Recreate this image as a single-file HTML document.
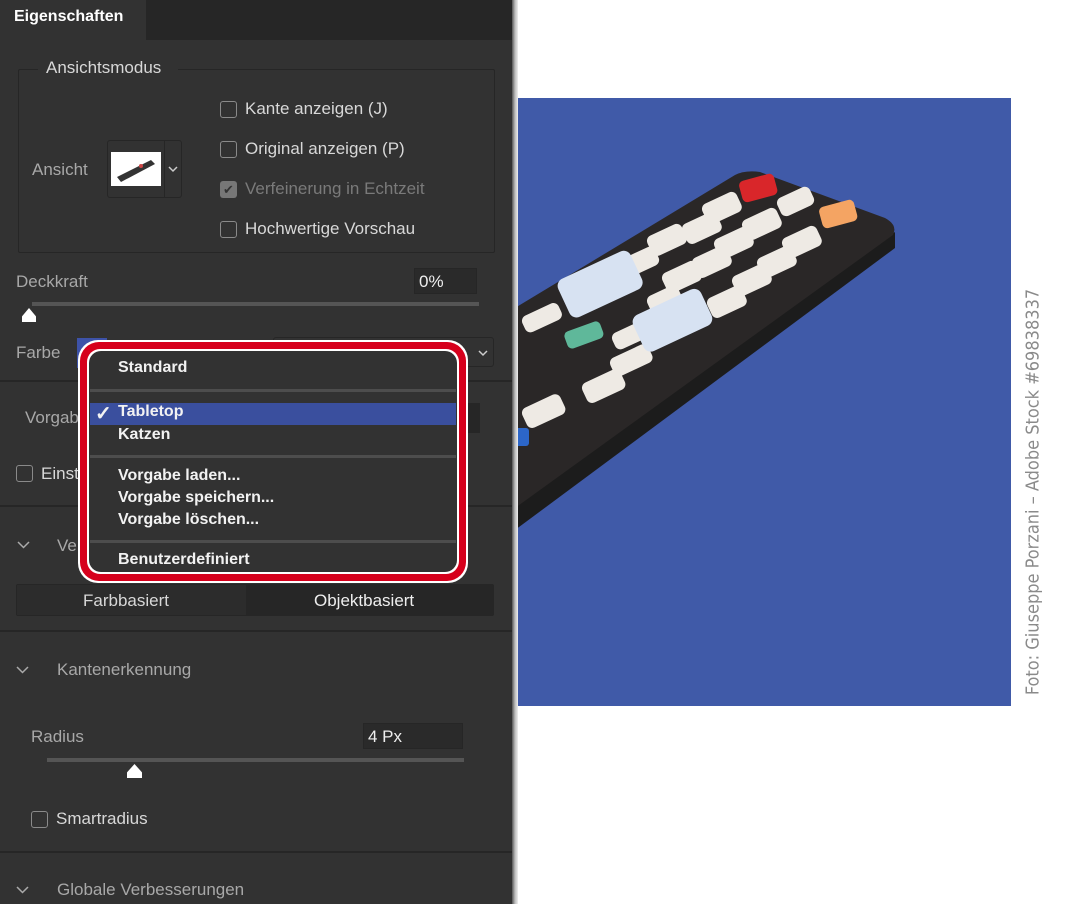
<!DOCTYPE html>
<html><head><meta charset="utf-8"><style>
*{margin:0;padding:0;box-sizing:border-box}
body{width:1070px;height:904px;background:#fff;position:relative;overflow:hidden;font-family:"Liberation Sans",sans-serif}
.a{position:absolute}
.t{position:absolute;color:#d8d8d8;font-size:17px;white-space:nowrap}
.g{color:#a8a8a8}
.cb{position:absolute;width:17px;height:17px;border:1.5px solid #8a8a8a;border-radius:3px}
.sep{position:absolute;left:0;width:512px;height:2px;background:#262626}
.m{position:absolute;left:118px;color:#f2f2f2;font-size:16px;font-weight:bold;white-space:nowrap}
.ms{position:absolute;left:90px;width:366px;height:3px;background:#4d4d4d}
.chev{position:absolute}
</style></head><body>
<div class="a" style="left:0;top:0;width:512px;height:904px;background:#323232"></div>
<div class="a" style="left:512px;top:0;width:6px;height:904px;background:linear-gradient(90deg,#555,#bbb,#eee)"></div>
<div class="a" style="left:146px;top:0;width:366px;height:40px;background:#262626"></div>
<div class="t" style="left:14px;top:8px;color:#fff;font-weight:bold;font-size:16px">Eigenschaften</div>
<div class="a" style="left:18px;top:69px;width:477px;height:184px;border:1px solid #262626;border-radius:2px"></div>
<div class="a" style="left:38px;top:58px;width:140px;height:20px;background:#323232"></div>
<div class="t" style="left:46px;top:58px">Ansichtsmodus</div>
<div class="t g" style="left:32px;top:160px">Ansicht</div>
<div class="a" style="left:107px;top:140px;width:75px;height:58px;border:1px solid #262626;border-radius:3px"></div>
<div class="a" style="left:164px;top:140px;width:1px;height:58px;background:#262626"></div>
<div class="a" style="left:111px;top:152px;width:50px;height:34px;background:#fff"><svg width="50" height="34"><polygon points="6,25 40,8 44,12 10,30" fill="#333"/><circle cx="30" cy="14" r="2" fill="#c44"/></svg></div>
<svg class="chev" style="left:168px;top:166px" width="10" height="7"><path d="M1,1 L5,5 L9,1" stroke="#ccc" stroke-width="1.5" fill="none"/></svg>
<div class="cb" style="left:220px;top:101px"></div><div class="t" style="left:245px;top:99px">Kante anzeigen (J)</div>
<div class="cb" style="left:220px;top:141px"></div><div class="t" style="left:245px;top:139px">Original anzeigen (P)</div>
<div class="a" style="left:220px;top:181px;width:17px;height:17px;background:#777;border-radius:3px;color:#333;font-size:13px;text-align:center;line-height:17px">✔</div><div class="t" style="left:245px;top:179px;color:#7a7a7a">Verfeinerung in Echtzeit</div>
<div class="cb" style="left:220px;top:221px"></div><div class="t" style="left:245px;top:219px">Hochwertige Vorschau</div>
<div class="t g" style="left:16px;top:272px">Deckkraft</div>
<div class="a" style="left:414px;top:268px;width:63px;height:26px;border:1px solid #262626;background:#2a2a2a"></div>
<div class="t" style="left:419px;top:272px;color:#eee">0%</div>
<div class="a" style="left:32px;top:302px;width:447px;height:4px;background:#555"></div>
<div class="a" style="left:22px;top:308px;width:14px;height:14px;background:#fff;clip-path:polygon(50% 0,100% 60%,100% 100%,0 100%,0 60%)"></div>
<div class="t g" style="left:16px;top:343px">Farbe</div>
<div class="a" style="left:77px;top:338px;width:30px;height:30px;background:#3d52a8"></div>
<div class="a" style="left:273px;top:337px;width:221px;height:30px;border:1px solid #262626;border-radius:3px"></div>
<svg class="chev" style="left:478px;top:350px" width="10" height="7"><path d="M1,1 L5,5 L9,1" stroke="#ccc" stroke-width="1.5" fill="none"/></svg>
<div class="sep" style="top:380px"></div>
<div class="t g" style="left:25px;top:408px">Vorgabe</div>
<div class="a" style="left:460px;top:403px;width:20px;height:30px;background:#262626"></div>
<div class="cb" style="left:16px;top:465px"></div><div class="t" style="left:41px;top:464px">Einstellungen</div>
<div class="sep" style="top:505px"></div>
<svg class="chev" style="left:17px;top:541px" width="13" height="8"><path d="M1,1 L6.5,6.5 L12,1" stroke="#aaa" stroke-width="1.5" fill="none"/></svg>
<div class="t g" style="left:57px;top:536px">Verfeinerungsmodus</div>
<div class="a" style="left:16px;top:584px;width:478px;height:32px;background:#262626;border-radius:2px"></div>
<div class="a" style="left:17px;top:585px;width:229px;height:30px;background:#2c2c2c"></div>
<div class="t" style="left:83px;top:591px">Farbbasiert</div>
<div class="t" style="left:314px;top:591px;color:#eee">Objektbasiert</div>
<div class="sep" style="top:630px"></div>
<svg class="chev" style="left:16px;top:666px" width="13" height="8"><path d="M1,1 L6.5,6.5 L12,1" stroke="#aaa" stroke-width="1.5" fill="none"/></svg>
<div class="t g" style="left:57px;top:660px">Kantenerkennung</div>
<div class="t g" style="left:31px;top:727px">Radius</div>
<div class="a" style="left:363px;top:723px;width:100px;height:26px;border:1px solid #262626;background:#2a2a2a"></div>
<div class="t" style="left:368px;top:727px;color:#eee">4 Px</div>
<div class="a" style="left:47px;top:758px;width:417px;height:4px;background:#555"></div>
<div class="a" style="left:127px;top:764px;width:15px;height:14px;background:#fff;clip-path:polygon(50% 0,100% 60%,100% 100%,0 100%,0 60%)"></div>
<div class="cb" style="left:31px;top:811px"></div><div class="t" style="left:56px;top:809px">Smartradius</div>
<div class="sep" style="top:851px"></div>
<svg class="chev" style="left:16px;top:886px" width="13" height="8"><path d="M1,1 L6.5,6.5 L12,1" stroke="#aaa" stroke-width="1.5" fill="none"/></svg>
<div class="t g" style="left:57px;top:880px">Globale Verbesserungen</div>

<!-- menu -->
<div class="a" style="left:78px;top:340px;width:390px;height:243px;border-radius:20px;background:#fff"></div>
<div class="a" style="left:80px;top:342px;width:386px;height:239px;border-radius:19px;background:#d6001c"></div>
<div class="a" style="left:87px;top:349px;width:372px;height:225px;border-radius:13px;background:#fff"></div>
<div class="a" style="left:89px;top:351px;width:368px;height:221px;border-radius:12px;background:#323232"></div>
<div class="m" style="top:359px">Standard</div>
<div class="ms" style="top:389px"></div>
<div class="a" style="left:90px;top:403px;width:366px;height:22px;background:#3a4f9e"></div>
<div class="m" style="left:95px;top:401px;font-size:20px">✓</div>
<div class="m" style="top:403px">Tabletop</div>
<div class="m" style="top:426px">Katzen</div>
<div class="ms" style="top:455px"></div>
<div class="m" style="top:467px">Vorgabe laden...</div>
<div class="m" style="top:489px">Vorgabe speichern...</div>
<div class="m" style="top:511px">Vorgabe löschen...</div>
<div class="ms" style="top:540px"></div>
<div class="m" style="top:551px">Benutzerdefiniert</div>

<!-- photo -->
<div class="a" style="left:518px;top:98px;width:493px;height:608px;background:#405aa8;overflow:hidden">
<svg width="493" height="608" viewBox="518 98 493 608">
<polygon points="515,530 895,248 895,232 515,505" fill="#1c1c1c"/>
<path d="M515,308 L735,175 Q745,170 760,172 L885,218 Q898,225 893,235 L515,508 Z" fill="#2a2727"/>
<g fill="#eeeae4">
<rect x="700" y="206" width="38" height="22" rx="6" transform="rotate(-25 700 206)"/>
<rect x="680" y="226" width="38" height="22" rx="6" transform="rotate(-25 680 226)"/>
<rect x="740" y="222" width="38" height="22" rx="6" transform="rotate(-25 740 222)"/>
<rect x="645" y="238" width="38" height="22" rx="6" transform="rotate(-25 645 238)"/>
<rect x="712" y="241" width="38" height="22" rx="6" transform="rotate(-25 712 241)"/>
<rect x="780" y="240" width="38" height="22" rx="6" transform="rotate(-25 780 240)"/>
<rect x="690" y="260" width="38" height="22" rx="6" transform="rotate(-25 690 260)"/>
<rect x="755" y="260" width="38" height="22" rx="6" transform="rotate(-25 755 260)"/>
<rect x="660" y="275" width="38" height="22" rx="6" transform="rotate(-25 660 275)"/>
<rect x="730" y="278" width="38" height="22" rx="6" transform="rotate(-25 730 278)"/>
<rect x="620" y="260" width="36" height="20" rx="6" transform="rotate(-25 620 260)"/>
<rect x="645" y="298" width="34" height="20" rx="6" transform="rotate(-25 645 298)"/>
<rect x="705" y="300" width="38" height="22" rx="6" transform="rotate(-25 705 300)"/>
<rect x="610" y="335" width="40" height="18" rx="6" transform="rotate(-25 610 335)"/>
<rect x="520" y="318" width="40" height="18" rx="6" transform="rotate(-25 520 318)"/>
<rect x="608" y="360" width="42" height="20" rx="6" transform="rotate(-25 608 360)"/>
<rect x="580" y="385" width="42" height="22" rx="6" transform="rotate(-25 580 385)"/>
<rect x="520" y="410" width="42" height="22" rx="6" transform="rotate(-25 520 410)"/>
<rect x="775" y="200" width="36" height="20" rx="6" transform="rotate(-25 775 200)"/>
</g>
<g fill="#d7e2f2">
<rect x="555" y="282" width="80" height="42" rx="8" transform="rotate(-25 555 282)"/>
<rect x="630" y="318" width="75" height="40" rx="8" transform="rotate(-25 630 318)"/>
</g>
<rect x="738" y="182" width="36" height="22" rx="5" fill="#d9262a" transform="rotate(-15 738 182)"/>
<rect x="818" y="208" width="36" height="22" rx="5" fill="#f4a463" transform="rotate(-15 818 208)"/>
<rect x="563" y="333" width="38" height="18" rx="5" fill="#5fb89a" transform="rotate(-20 563 333)"/>
<rect x="515" y="428" width="14" height="18" rx="3" fill="#2c66c8"/>
</svg></div>
<div class="a" style="left:1033px;top:492px;transform:translate(-50%,-50%) rotate(-90deg);color:#8a8a8a;font-size:18px;white-space:nowrap;font-family:'DejaVu Sans Condensed','Liberation Sans',sans-serif;font-weight:300">Foto: Giuseppe Porzani – Adobe Stock #69838337</div>
</body></html>
